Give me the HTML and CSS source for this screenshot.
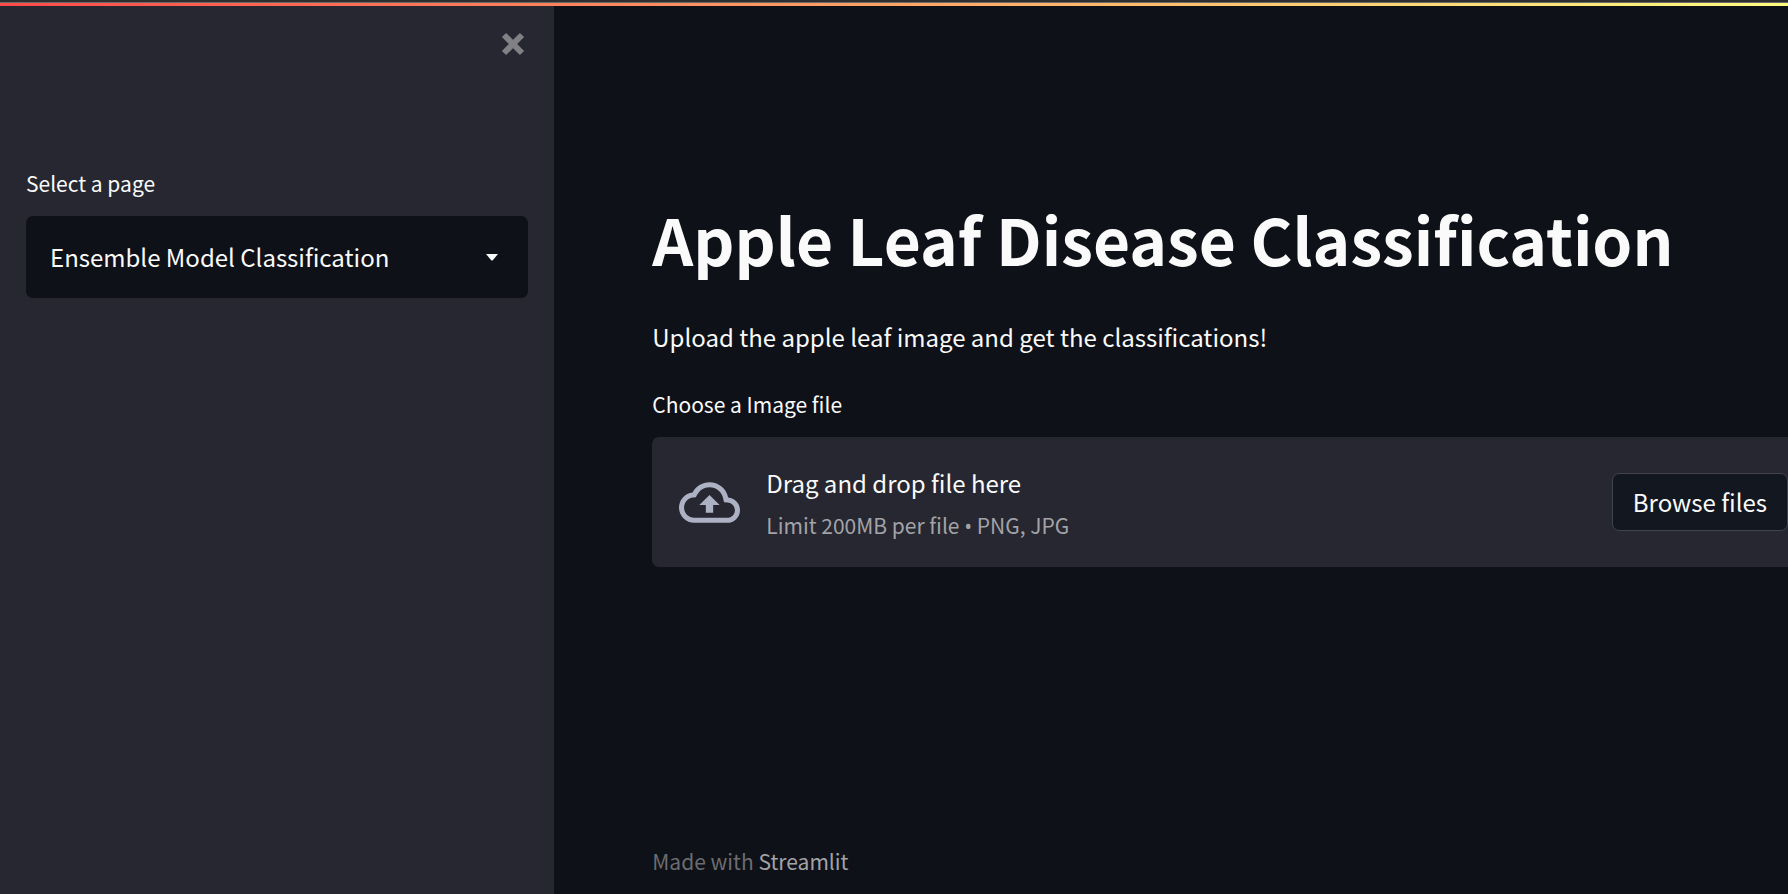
FILE: index.html
```html
<!DOCTYPE html>
<html lang="en">
<head>
    <meta charset="UTF-8">
    <meta name="viewport" content="width=device-width, initial-scale=1.0">
    <title>Apple Leaf Disease Classification</title>
    <link rel="stylesheet" href="styles.css">
</head>
<body>
    <div class="top-edge"></div>
    <div class="decoration"></div>

    <div class="app">
        <aside class="sidebar">
            <button class="close-button" type="button" aria-label="Close sidebar">
                <svg width="24" height="24" viewBox="0 0 24 24">
                    <path d="M3 3L21 21M21 3L3 21" stroke="currentColor" stroke-width="6"/>
                </svg>
            </button>

            <label class="label" for="page">Select a page</label>
            <div class="select-box">
                <select class="select" id="page">
                    <option>Ensemble Model Classification</option>
                </select>
                <svg class="arrow" width="12" height="7" viewBox="0 0 12 7">
                    <path d="M0 0H12L7 6Q6 7 5 6Z" fill="currentColor"/>
                </svg>
            </div>
        </aside>

        <main class="main">
            <h1 class="title">Apple Leaf Disease Classification</h1>
            <p class="text">Upload the apple leaf image and get the classifications!</p>

            <label class="label" for="browse">Choose a Image file</label>
            <section class="dropzone">
                <svg class="upload-icon" width="61" height="61" viewBox="0 0 24 24">
                    <path fill="currentColor" d="M19.35 10.04A7.49 7.49 0 0012 4C9.11 4 6.6 5.64 5.35 8.04A5.994 5.994 0 000 14c0 3.31 2.69 6 6 6h13c2.76 0 5-2.24 5-5 0-2.64-2.05-4.78-4.65-4.96zM19 18H6c-2.21 0-4-1.79-4-4 0-2.05 1.53-3.76 3.56-3.97l1.07-.11.5-.95A5.469 5.469 0 0112 6c2.62 0 4.88 1.86 5.39 4.43l.3 1.5 1.53.11A2.98 2.98 0 0122 15c0 1.65-1.35 3-3 3zM8 13h2.55v3h2.9v-3H16l-4-4z"/>
                </svg>
                <div class="instructions">
                    <span class="text">Drag and drop file here</span>
                    <small class="limit">Limit 200MB per file <span class="bullet">•</span> PNG, JPG</small>
                </div>
                <button class="browse-button" id="browse" type="button">Browse files</button>
            </section>

            <footer class="footer">Made with <a class="footer-link" href="#">Streamlit</a></footer>
        </main>
    </div>
</body>
</html>
```
FILE: styles.css
```css
* {
    box-sizing: border-box;
}

body {
    margin: 0;
    min-height: 100vh;
    display: flex;
    flex-direction: column;
    font-family: "Noto Sans CJK SC", "Noto Sans", sans-serif;
    font-size: 24px;
    line-height: 42px;
    color: #fafafa;
    background: #0e1117;
}

.top-edge {
    height: 3px;
    background: #2e2e2e;
    border-bottom: 1px solid #6a6a6a;
}

.decoration {
    height: 3px;
    background: linear-gradient(90deg, #ff4b4b, #fffd80);
}

.app {
    flex: 1;
    display: flex;
}

.sidebar {
    flex: 0 0 31%;
    display: flex;
    flex-direction: column;
    padding: 26px;
    background: #262730;
}

.close-button {
    align-self: flex-end;
    display: flex;
    padding: 0;
    margin: 0 3px 110px 0;
    border: none;
    background: none;
    color: #808085;
    cursor: pointer;
}

.label {
    font-size: 21px;
    line-height: 34px;
    margin-bottom: 16px;
}

.select-box {
    display: grid;
    align-items: center;
}

.select {
    grid-area: 1 / 1;
    width: 100%;
    height: 82px;
    padding: 0 60px 0 24px;
    border: none;
    border-radius: 7px;
    appearance: none;
    font: inherit;
    color: inherit;
    background: #0e1117;
}

.arrow {
    grid-area: 1 / 1;
    justify-self: end;
    margin-right: 30px;
    pointer-events: none;
}

.main {
    flex: 1;
    min-width: 0;
    display: flex;
    flex-direction: column;
    padding: 190px 0 12px 98px;
    overflow: hidden;
}

.title {
    margin: 0 0 36px;
    font-size: 64px;
    font-weight: 700;
    line-height: 84px;
}

.text {
    margin: 0 0 29px;
}

/* the drop area runs past the right edge of the window */
.dropzone {
    display: flex;
    align-items: center;
    gap: 26px;
    height: 130px;
    margin-right: -26px;
    padding: 0 26px 0 27px;
    border-radius: 7px;
    background: #262730;
}

.upload-icon {
    color: #acb1c4;
}

.instructions {
    display: flex;
    flex-direction: column;
    margin-right: auto;
    padding-top: 4px;
}

.instructions .text {
    margin: 0;
}

.limit {
    font-size: 21px;
    color: #a3a3a7;
}

/* the CJK face draws a full-width bullet */
.bullet {
    font-family: "Open Sans", sans-serif;
}

.browse-button {
    height: 58px;
    padding: 0 20px;
    border: 1px solid #41444c;
    border-radius: 7px;
    font: inherit;
    color: inherit;
    background: #131720;
    cursor: pointer;
}

.footer {
    margin-top: auto;
    font-size: 21px;
    color: #6b6c70;
}

.footer-link {
    color: #a3a3a7;
    text-decoration: none;
}
```
